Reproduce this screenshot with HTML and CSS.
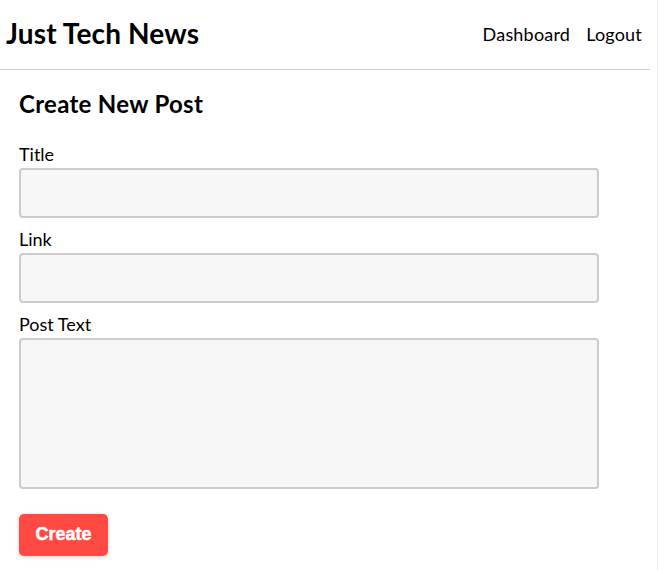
FILE: index.html
```html
<!DOCTYPE html>
<html lang="en">
<head>
<meta charset="utf-8">
<title>Just Tech News</title>
<link rel="stylesheet" href="styles.css">
</head>
<body>
<div class="page">
  <header class="site-header">
    <h1 class="brand">Just Tech News</h1>
    <nav class="nav">
      <a href="#" class="nav-link">Dashboard</a>
      <a href="#" class="nav-link">Logout</a>
    </nav>
  </header>
  <main class="main">
    <h2 class="form-title">Create New Post</h2>
    <form class="post-form">
      <label class="field-label" for="title">Title</label>
      <input class="field-input" id="title" type="text">
      <label class="field-label" for="link">Link</label>
      <input class="field-input" id="link" type="text">
      <label class="field-label" for="text">Post Text</label>
      <textarea class="field-input field-textarea" id="text"></textarea>
      <button class="btn-create" type="button">Create</button>
    </form>
  </main>
</div>
</body>
</html>
```
FILE: styles.css
```css
html { background: #fff; }
body {
  margin: 0;
  width: 657px;
  min-height: 100vh;
  border-right: 1px solid #ececec;
  font-family: Lato, "Open Sans", sans-serif;
  color: #000;
}
.page { width: 650px; }
.site-header {
  height: 69px;
  border-bottom: 1px solid #cccccc;
  display: flex;
  justify-content: space-between;
  align-items: flex-start;
  padding: 0 8px 0 6px;
}
.brand {
  margin: 17px 0 0;
  font-size: 28px;
  line-height: 1.2;
  font-weight: 700;
  letter-spacing: 0.15px;
}
.nav {
  display: flex;
  gap: 16px;
  margin-top: 24px;
}
.nav-link {
  color: #000;
  text-decoration: none;
  font-size: 18px;
  line-height: 1.2;
  letter-spacing: 0.2px;
}
.main { padding: 20px 19px 0; }
.form-title {
  margin: 0;
  font-size: 24px;
  line-height: 1.2;
  font-weight: 700;
  letter-spacing: 0.3px;
}
.post-form {
  display: flex;
  flex-direction: column;
  align-items: flex-start;
  margin-top: 24px;
  width: 580px;
}
.field-label {
  font-size: 18px;
  line-height: 22px;
  margin-bottom: 3px;
}
.field-input {
  box-sizing: border-box;
  width: 580px;
  height: 50px;
  margin: 0 0 10px;
  background: #f7f7f7;
  border: 2px solid #cccccc;
  border-radius: 4px;
  font-family: inherit;
  font-size: 16px;
}
.field-textarea {
  height: 151px;
  resize: none;
  margin-bottom: 25px;
}
.btn-create {
  box-sizing: border-box;
  width: 89px;
  height: 42px;
  background: #ff4a43;
  color: #fff;
  border: none;
  border-radius: 5px;
  font-family: "Liberation Sans", Arial, sans-serif;
  font-weight: 700;
  font-size: 18px;
  padding: 0;
  box-shadow: 0 1px 4px rgba(0,0,0,0.2);
  -webkit-text-stroke: 0.5px #fff;
}
```
